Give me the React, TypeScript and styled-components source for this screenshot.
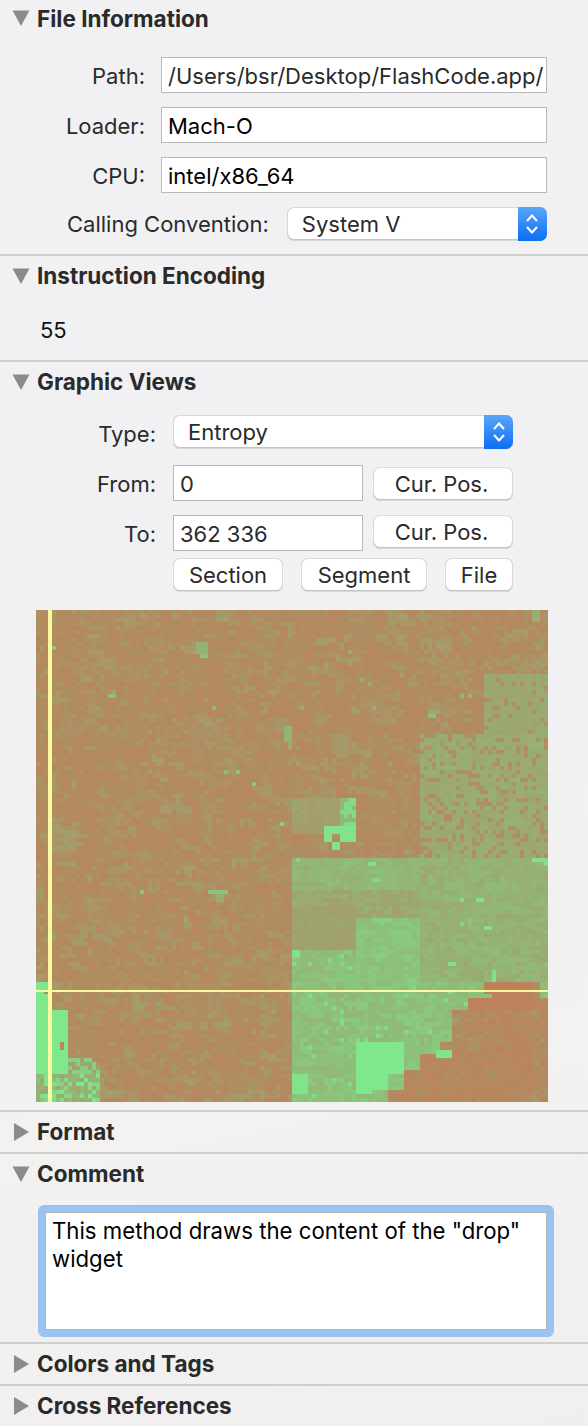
import React, { useMemo } from "react";
import styled, { createGlobalStyle } from "styled-components";

const Global = createGlobalStyle`
  html, body { margin: 0; padding: 0; }
  body {
    width: 588px;
    height: 1426px;
    overflow: hidden;
    background: linear-gradient(168deg, #f1f1f3 0%, #f1f1f3 55%, #f3f1f0 80%, #f0efef 100%);
    font-family: Inter, Roboto, "Liberation Sans", sans-serif;
    color: #222;
  }
`;

const Panel = styled.div`
  width: 588px;
  height: 1426px;
  display: flex;
  flex-direction: column;
  overflow: hidden;
`;

const Section = styled.section<{ $height: number }>`
  height: ${(p) => p.$height}px;
  box-sizing: border-box;
  flex: none;
  border-bottom: 2px solid #cfcfcf;
  &:last-child { border-bottom: none; }
`;

const Header = styled.div<{ $height?: number }>`
  height: ${(p) => p.$height ?? 39}px;
  display: flex;
  align-items: center;
  padding-left: 12px;
  gap: 7px;
`;

const ArrowBox = styled.svg`
  width: 18px;
  height: 18px;
  flex: none;
`;

const Title = styled.span`
  font-size: 22.5px;
  font-weight: 700;
  color: #2a2a2a;
`;

const Arrow = ({ open }: { open: boolean }) => (
  <ArrowBox viewBox="0 0 18 18">
    {open ? <path d="M0.5 1.5H17.5L9 17Z" fill="#8b8b8b" /> : <path d="M2 0L17 9L2 18Z" fill="#8b8b8b" />}
  </ArrowBox>
);

const FileGrid = styled.div`
  display: grid;
  grid-template-columns: 145px 386px;
  column-gap: 16px;
  row-gap: 14px;
  margin-top: 21px;
`;

const Label = styled.div`
  font-size: 22px;
  line-height: 36px;
  height: 36px;
  padding-top: 1px;
  box-sizing: border-box;
  text-align: right;
  color: #2a2a2a;
  white-space: nowrap;
`;

const ConventionLabel = styled(Label)`
  line-height: 34px;
  height: 34px;
  padding-top: 0;
`;

const Field = styled.div<{ $dark?: boolean }>`
  height: 36px;
  box-sizing: border-box;
  border: 1px solid #b9b9b9;
  background: #fff;
  padding: 1px 0 0 6px;
  display: flex;
  align-items: center;
  font-size: 22px;
  color: ${(p) => (p.$dark ? "#000" : "#2a2a2a")};
  white-space: nowrap;
  overflow: hidden;
`;

const ConventionRow = styled.div`
  display: flex;
  align-items: center;
  margin-top: 14px;
  padding-left: 67px;
  gap: 18px;
  height: 34px;
`;

const SelectBox = styled.div<{ $width: number }>`
  width: ${(p) => p.$width}px;
  height: 34px;
  box-sizing: border-box;
  flex: none;
  background: #fff;
  border-radius: 7px;
  box-shadow: inset 0 0 0 1px #d9d9d9, inset 0 -1px 0 1px #c4c4c4;
  display: flex;
  align-items: center;
  justify-content: space-between;
  font-size: 22px;
  color: #2a2a2a;
  padding-left: 15px;
  overflow: hidden;
`;

const Stepper = styled.div`
  width: 29px;
  height: 100%;
  background: linear-gradient(#5aa6fb, #0b6ff2);
  display: flex;
  align-items: center;
  justify-content: center;
`;

const StepIcon = styled.svg`
  width: 14px;
  height: 24px;
`;

const Chevrons = () => (
  <Stepper>
    <StepIcon viewBox="0 0 14 24" fill="none" stroke="#fff" strokeWidth="2">
      <path d="M2 9L7 3.5L12 9" />
      <path d="M2 15L7 20.5L12 15" />
    </StepIcon>
  </Stepper>
);

const HexValue = styled.div`
  font-size: 22px;
  color: #111;
  padding: 22px 0 0 40px;
`;

const ViewsGrid = styled.div`
  display: grid;
  grid-template-columns: 156px 207px 150px;
  grid-template-rows: 50px 50px 36px;
  align-items: start;
  margin-top: 14px;
`;

const SelectCell = styled.div`
  grid-column: 2 / 4;
  margin-left: 17px;
`;

const InputCell = styled.div`
  margin-left: 17px;
`;

const Button = styled.div<{ $width: number }>`
  width: ${(p) => p.$width}px;
  height: 34px;
  flex: none;
  box-sizing: border-box;
  background: #fff;
  border-radius: 7px;
  box-shadow: inset 0 0 0 1px #dadada, inset 0 -1px 0 1px #c4c4c4;
  display: flex;
  align-items: center;
  justify-content: center;
  font-size: 22px;
  color: #2a2a2a;
`;

const PosButton = styled(Button)`
  padding-right: 3px;
`;

const ButtonCell = styled.div<{ $top: number }>`
  margin-left: 10px;
  margin-top: ${(p) => p.$top}px;
`;

const ButtonRow = styled.div`
  display: flex;
  gap: 18px;
  margin: 7px 0 0 173px;
`;

const Map = styled.svg`
  display: block;
  width: 512px;
  height: 492px;
  margin: 18px 0 0 36px;
`;

const CommentRing = styled.div`
  width: 516px;
  height: 132px;
  box-sizing: border-box;
  margin: 12px 0 0 38px;
  border: 7px solid #99c4f2;
  border-radius: 6px;
  box-shadow: inset 0 0 0 1px #b5b5b5;
  background: #fff;
  padding: 5px 7px 0 7px;
  font-size: 22.2px;
  line-height: 28px;
  color: #000;
`;

// Heat map: 128 x 123 cells of 4px, filled from a seeded noise field.
const stops: [number, number[]][] = [
  [0, [190, 129, 91]],
  [0.3, [174, 143, 99]],
  [0.55, [155, 168, 112]],
  [0.8, [138, 198, 125]],
  [1, [128, 232, 140]],
];

function ramp(g: number): string {
  const v = Math.max(0, Math.min(1, g));
  for (let i = 1; i < stops.length; i++) {
    if (v <= stops[i][0]) {
      const [a, ca] = stops[i - 1];
      const [b, cb] = stops[i];
      const t = (v - a) / (b - a);
      return `rgb(${ca.map((c, j) => Math.round(c + (cb[j] - c) * t)).join(",")})`;
    }
  }
  return "rgb(128,232,140)";
}

const within = (x: number, y: number, x0: number, y0: number, x1: number, y1: number) =>
  x >= x0 && x < x1 && y >= y0 && y < y1;

const spots: [number, number, number, number, number][] = [
  [196, 641, 208, 653, 0.62], [200, 651, 208, 656, 0.75], [108, 691, 116, 695, 0.78], [112, 687, 116, 691, 0.5],
  [212, 703, 216, 707, 0.7], [52, 644, 56, 648, 0.8], [284, 725, 292, 741, 0.65], [288, 741, 292, 748, 0.55],
  [224, 769, 228, 773, 0.7], [236, 767, 240, 771, 0.78], [252, 782, 256, 786, 0.8], [280, 822, 284, 826, 0.85],
  [346, 650, 350, 654, 0.6], [372, 705, 376, 709, 0.6], [360, 678, 364, 682, 0.6], [368, 679, 372, 683, 0.55],
  [370, 703, 374, 707, 0.6], [428, 710, 440, 714, 0.55], [458, 691, 462, 695, 0.7], [468, 694, 472, 698, 0.7],
  [428, 710, 434, 717, 0.72], [434, 706, 436, 714, 0.7], [532, 610, 540, 620, 0.6], [300, 706, 304, 710, 0.6],
  [302, 645, 304, 650, 0.5], [208, 889, 228, 893, 0.8], [216, 891, 224, 900, 0.6], [140, 890, 144, 894, 0.82],
  [182, 918, 186, 922, 0.6],
  [294, 855, 298, 860, 0.9], [366, 860, 376, 864, 0.95], [530, 856, 546, 860, 0.95], [542, 860, 546, 864, 0.95],
  [372, 875, 380, 879, 0.9], [458, 895, 462, 902, 0.95], [474, 895, 482, 902, 0.95], [460, 920, 464, 925, 0.9],
  [484, 925, 492, 929, 0.95], [490, 970, 494, 980, 0.95], [446, 960, 454, 964, 0.95], [468, 915, 472, 925, 0.8],
  [436, 1048, 452, 1056, 0.98], [484, 993, 492, 998, 0.8], [292, 950, 300, 955, 0.95],
];

function field(x: number, y: number, a: number, b: number, c: number): number {
  const brown = 0.16 + a * a * 0.26 + (b > 0.88 ? 0.04 : 0);
  if (within(x, y, 36, 979, 48, 1071) || within(x, y, 52, 1010, 68, 1071)) {
    if (within(x, y, 60, 1041, 64, 1048) || within(x, y, 44, 987, 48, 992)) return 0.2;
    return 1;
  }
  if (within(x, y, 356, 1041, 404, 1071) || within(x, y, 356, 1071, 388, 1087) || within(x, y, 356, 1087, 372, 1091)) return 1;
  if (within(x, y, 292, 1071, 308, 1093)) return 0.97;
  if (within(x, y, 332, 833, 340, 841)) return 0.25;
  if (within(x, y, 324, 825, 356, 841) || within(x, y, 332, 841, 340, 848)) return 0.97;
  if (within(x, y, 340, 795, 356, 825)) return c > 0.45 ? 0.92 : 0.68;
  if (within(x, y, 292, 795, 340, 825)) return 0.42 + a * 0.1;
  if (within(x, y, 292, 825, 324, 833)) return 0.42;
  for (const s of spots) if (within(x, y, s[0], s[1], s[2], s[3])) return s[4];
  if (within(x, y, 36, 1071, 100, 1102)) return c > 0.55 ? 0.85 + a * 0.15 : 0.55 + b * 0.2;
  if (within(x, y, 68, 1055, 100, 1071) && x - 68 + (1071 - y) * 1.2 < 38) return c > 0.5 ? 0.85 : 0.5;
  if (within(x, y, 52, 825, 76, 852)) return 0.32 + a * 0.12;
  if (x >= 292) {
    if (y >= 855) {
      const stair =
        (y >= 979 && y < 1008 && x >= 484 && x < 537) ||
        (y >= 996 && y < 1010 && x >= 468) ||
        (y >= 1008 && y < 1041 && x >= 452) ||
        (y >= 1041 && y < 1052 && x >= 438) ||
        (y >= 1052 && x >= 420) ||
        (y >= 1068 && x >= 404) ||
        (y >= 1088 && x >= 388);
      if (stair) {
        if (y < 1010 && x < 530) return 0.02;
        const olive = x > 530 || within(x, y, 440, 1010, 500, 1050) ? 0.22 : 0.1;
        return 0.03 + a * a * 0.2 + olive * b;
      }
      if (within(x, y, 420, 855, 548, 979)) return 0.56 + a * 0.14;
      if (within(x, y, 292, 905, 356, 948)) return 0.45 + a * 0.08;
      if (within(x, y, 292, 890, 420, 918)) return 0.47 + a * 0.16;
      if (within(x, y, 356, 918, 420, 982)) return 0.72 + a * 0.12;
      if (y < 890) return 0.6 + a * 0.14;
      if (y >= 948) return c > 0.97 ? 0.92 : 0.67 + a * 0.16;
      return 0.6 + a * 0.16;
    }
    if (y >= 733 && x >= 420) return c < 0.25 ? 0.22 + a * 0.14 : 0.52 + a * 0.1;
    if (y >= 672 && x >= 484) return c < 0.1 ? 0.24 : 0.5 + a * 0.08;
    if (within(x, y, 420, 636, 452, 665) && c < 0.4) return 0.36 + a * 0.08;
  }
  if (within(x, y, 484, 610, 548, 672) && y > 650 && c < 0.4) return 0.38;
  return brown;
}

const HeatMap = () => {
  const paths = useMemo(() => {
    let seed = 20170;
    const rnd = () => {
      seed = (seed * 1664525 + 1013904223) >>> 0;
      return ((seed >>> 8) & 0xffff) / 65535;
    };
    const groups: Record<string, string> = {};
    let above: number[] = [];
    for (let row = 0; row < 123; row++) {
      const current: number[] = [];
      let left = rnd();
      for (let col = 0; col < 128; col++) {
        // clumps: a cell often repeats its neighbour's noise value
        const pick = rnd();
        let a = rnd();
        if (pick < 0.38) a = left;
        else if (pick < 0.58 && above[col] !== undefined) a = above[col];
        left = a;
        current[col] = a;
        const g = field(36 + col * 4, 610 + row * 4, a, rnd(), rnd());
        const key = ramp(Math.round(g * 40) / 40);
        groups[key] = (groups[key] || "") + `M${col * 4} ${row * 4}h4v4h-4z`;
      }
      above = current;
    }
    return Object.entries(groups);
  }, []);
  return (
    <Map viewBox="0 0 512 492" shapeRendering="crispEdges">
      {paths.map(([fill, d]) => (
        <path key={fill} fill={fill} d={d} />
      ))}
      <rect x="12" y="0" width="4" height="492" fill="#ffffa0" fillOpacity="0.95" />
      <rect x="0" y="380" width="512" height="2" fill="#ffffa0" fillOpacity="0.95" />
    </Map>
  );
};

export default function App() {
  return (
    <Panel>
      <Global />
      <Section $height={256}>
        <Header $height={36}>
          <Arrow open />
          <Title>File Information</Title>
        </Header>
        <FileGrid>
          <Label>Path:</Label>
          <Field>/Users/bsr/Desktop/FlashCode.app/</Field>
          <Label>Loader:</Label>
          <Field $dark>Mach-O</Field>
          <Label>CPU:</Label>
          <Field $dark>intel/x86_64</Field>
        </FileGrid>
        <ConventionRow>
          <ConventionLabel>Calling Convention:</ConventionLabel>
          <SelectBox $width={260}>
            System V
            <Chevrons />
          </SelectBox>
        </ConventionRow>
      </Section>
      <Section $height={106}>
        <Header>
          <Arrow open />
          <Title>Instruction Encoding</Title>
        </Header>
        <HexValue>55</HexValue>
      </Section>
      <Section $height={750}>
        <Header>
          <Arrow open />
          <Title>Graphic Views</Title>
        </Header>
        <ViewsGrid>
          <Label>Type:</Label>
          <SelectCell>
            <SelectBox $width={340}>
              Entropy
              <Chevrons />
            </SelectBox>
          </SelectCell>
          <Label>From:</Label>
          <InputCell>
            <Field>0</Field>
          </InputCell>
          <ButtonCell $top={2}>
            <PosButton $width={140}>Cur. Pos.</PosButton>
          </ButtonCell>
          <Label>To:</Label>
          <InputCell>
            <Field>362 336</Field>
          </InputCell>
          <ButtonCell $top={0}>
            <PosButton $width={140}>Cur. Pos.</PosButton>
          </ButtonCell>
        </ViewsGrid>
        <ButtonRow>
          <Button $width={110}>Section</Button>
          <Button $width={126}>Segment</Button>
          <Button $width={68}>File</Button>
        </ButtonRow>
        <HeatMap />
      </Section>
      <Section $height={42}>
        <Header>
          <Arrow open={false} />
          <Title>Format</Title>
        </Header>
      </Section>
      <Section $height={190}>
        <Header>
          <Arrow open />
          <Title>Comment</Title>
        </Header>
        <CommentRing>This method draws the content of the "drop" widget</CommentRing>
      </Section>
      <Section $height={42}>
        <Header>
          <Arrow open={false} />
          <Title>Colors and Tags</Title>
        </Header>
      </Section>
      <Section $height={40}>
        <Header>
          <Arrow open={false} />
          <Title>Cross References</Title>
        </Header>
      </Section>
    </Panel>
  );
}
